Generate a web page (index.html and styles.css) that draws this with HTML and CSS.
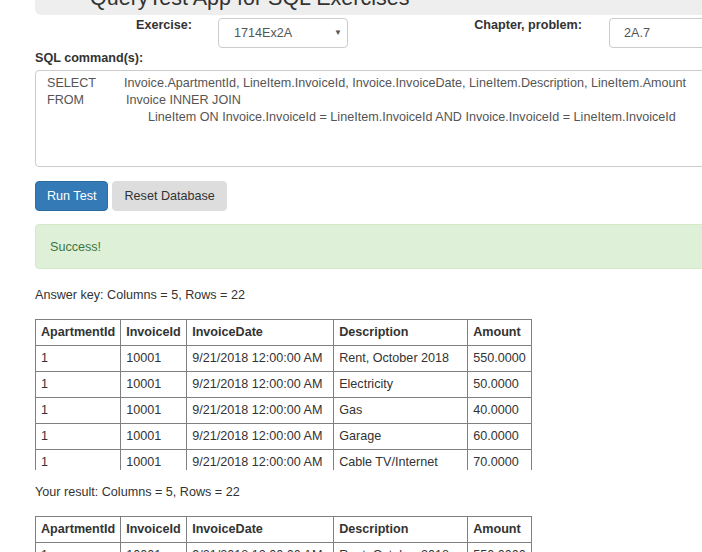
FILE: index.html
```html
<!DOCTYPE html>
<html>
<head>
<meta charset="utf-8">
<link rel="stylesheet" href="styles.css">
</head>
<body>
<div class="page">
  <div class="jumbo"><h1 class="title">QueryTest App for SQL Exercises</h1></div>
  <div class="form-row">
    <label class="lbl lbl-ex">Exercise:</label>
    <div class="select"><span>1714Ex2A</span><span class="arrow">&#9660;</span></div>
    <label class="lbl lbl-ch">Chapter, problem:</label>
    <div class="input">2A.7</div>
  </div>
  <div class="lbl sql-lbl">SQL command(s):</div>
  <div class="sql">
    <div class="line"><span class="kw kw-sel">SELECT</span>Invoice.ApartmentId, LineItem.InvoiceId, Invoice.InvoiceDate, LineItem.Description, LineItem.Amount</div>
    <div class="line"><span class="kw kw-from">FROM</span>Invoice INNER JOIN</div>
    <div class="line indent">LineItem ON Invoice.InvoiceId = LineItem.InvoiceId AND Invoice.InvoiceId = LineItem.InvoiceId</div>
  </div>
  <div class="buttons">
    <button class="btn btn-primary">Run Test</button>
    <button class="btn btn-default">Reset Database</button>
  </div>
  <div class="alert">Success!</div>
  <p class="caption cap1">Answer key: Columns = 5, Rows = 22</p>
  <div class="table-wrap">
    <table class="grid">
      <tr><th class="c1">ApartmentId</th><th class="c2">InvoiceId</th><th class="c3">InvoiceDate</th><th class="c4">Description</th><th class="c5">Amount</th></tr>
      <tr><td>1</td><td>10001</td><td>9/21/2018 12:00:00 AM</td><td>Rent, October 2018</td><td>550.0000</td></tr>
      <tr><td>1</td><td>10001</td><td>9/21/2018 12:00:00 AM</td><td>Electricity</td><td>50.0000</td></tr>
      <tr><td>1</td><td>10001</td><td>9/21/2018 12:00:00 AM</td><td>Gas</td><td>40.0000</td></tr>
      <tr><td>1</td><td>10001</td><td>9/21/2018 12:00:00 AM</td><td>Garage</td><td>60.0000</td></tr>
      <tr><td>1</td><td>10001</td><td>9/21/2018 12:00:00 AM</td><td>Cable TV/Internet</td><td>70.0000</td></tr>
    </table>
  </div>
  <p class="caption cap2">Your result: Columns = 5, Rows = 22</p>
  <div class="table-wrap">
    <table class="grid">
      <tr><th class="c1">ApartmentId</th><th class="c2">InvoiceId</th><th class="c3">InvoiceDate</th><th class="c4">Description</th><th class="c5">Amount</th></tr>
      <tr><td>1</td><td>10001</td><td>9/21/2018 12:00:00 AM</td><td>Rent, October 2018</td><td>550.0000</td></tr>
    </table>
  </div>
</div>
</body>
</html>
```

FILE: styles.css
```css
html, body {
  margin: 0;
  padding: 0;
  overflow: hidden;
  background: #fff;
}
body {
  font-family: "Liberation Sans", Arial, sans-serif;
  font-size: 12.6px;
  color: #333;
  line-height: 18px;
}
.page {
  padding-left: 35px;
  width: 760px;
}
.jumbo {
  background: #eee;
  border-radius: 6px;
  height: 60px;
  margin-top: -45px;
  padding-left: 55px;
  display: flex;
  align-items: flex-end;
  box-sizing: border-box;
  padding-bottom: 6px;
}
.title {
  margin: 0;
  font-size: 21.5px;
  font-weight: normal;
  line-height: 1;
  color: #333;
}
.form-row {
  display: flex;
  align-items: flex-start;
  margin-top: 3px;
  height: 30px;
}
.lbl {
  font-weight: bold;
  line-height: 14px;
}
.lbl-ex {
  width: 157px;
  text-align: right;
  margin-right: 26px;
}
.lbl-ch {
  width: 234px;
  text-align: right;
  margin-right: 27px;
}
.select, .input {
  box-sizing: border-box;
  height: 30px;
  border: 1px solid #ccc;
  border-radius: 4px;
  display: flex;
  align-items: center;
  color: #555;
}
.select {
  width: 130px;
  padding-left: 15px;
  padding-right: 5px;
  justify-content: space-between;
}
.arrow {
  font-size: 8px;
  color: #555;
}
.input {
  width: 140px;
  padding-left: 14px;
}
.sql-lbl {
  margin-top: 1px;
  line-height: 18px;
}
.sql {
  box-sizing: border-box;
  margin-top: 3px;
  height: 97px;
  width: 700px;
  border: 1px solid #ccc;
  border-radius: 4px;
  padding: 4px 11px;
  color: #555;
  line-height: 17.2px;
  white-space: nowrap;
}
.kw {
  display: inline-block;
}
.kw-sel { width: 77px; }
.kw-from { width: 79px; }
.indent { padding-left: 101px; }
.buttons {
  display: flex;
  gap: 4px;
  margin-top: 14px;
}
.btn {
  font-family: inherit;
  font-size: 12.6px;
  height: 30px;
  padding: 0 11px;
  border-radius: 4px;
  border: 1px solid transparent;
  margin: 0;
  white-space: nowrap;
}
.btn-primary {
  background: #337ab7;
  border-color: #2e6da4;
  color: #fff;
}
.btn-default {
  background: #ddd;
  border-color: #ddd;
  color: #333;
}
.alert {
  box-sizing: border-box;
  margin-top: 13px;
  height: 45px;
  width: 700px;
  background: #dff0d8;
  border: 1px solid #d6e9c6;
  border-radius: 4px;
  color: #3c763d;
  padding-left: 14px;
  display: flex;
  align-items: center;
}
.caption {
  margin: 0;
}
.cap1 { margin-top: 17px; }
.cap2 { margin-top: 13px; }
.table-wrap {
  margin-top: 15px;
  height: 151px;
  overflow: hidden;
}
.grid {
  border-collapse: collapse;
  white-space: nowrap;
}
.grid th, .grid td {
  border: 1px solid #808080;
  padding: 3px 5px;
  line-height: 19px;
  text-align: left;
}
.grid th { font-weight: bold; }
.c1 { width: 74px; }
.c2 { width: 55px; }
.c3 { width: 136px; }
.c4 { width: 123px; }
.c5 { width: 52px; }
```
